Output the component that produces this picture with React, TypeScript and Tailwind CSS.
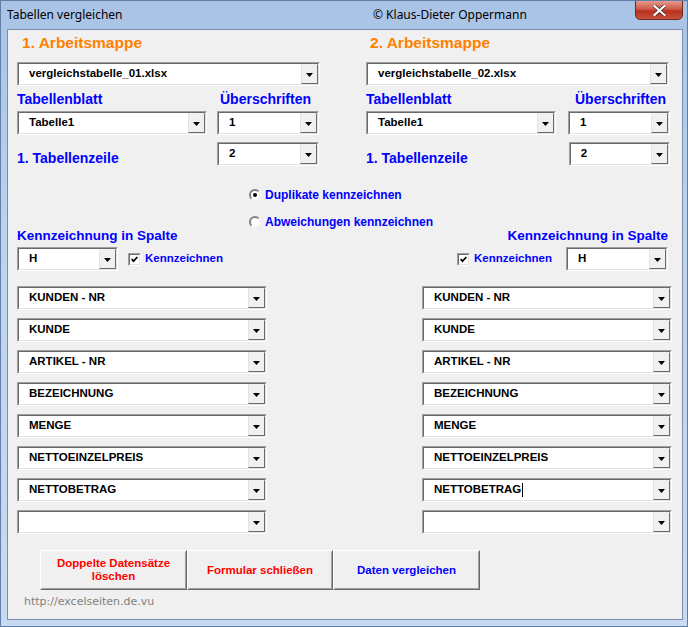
import React from 'react'

const fields = ['KUNDEN - NR', 'KUNDE', 'ARTIKEL - NR', 'BEZEICHNUNG', 'MENGE', 'NETTOEINZELPREIS', 'NETTOBETRAG', '']

function Arrow() {
  return (
    <svg width="7" height="4" viewBox="0 0 7 4" className="mt-px">
      <path d="M0 0h7L3.5 4z" fill="#000" />
    </svg>
  )
}

function Combo({ value = '', className = '', caret = false }: { value?: string; className?: string; caret?: boolean }) {
  return (
    <div className={`h-[24px] flex border border-t-[#a0a0a0] border-l-[#a0a0a0] border-b-white border-r-white ${className}`}>
      <div className="flex-1 min-w-0 flex bg-white border border-t-[#696969] border-l-[#696969] border-b-[#e3e3e3] border-r-[#e3e3e3]">
        <div className="flex-1 min-w-0 flex items-center pl-[10px] text-[11.5px] font-bold text-black whitespace-nowrap overflow-hidden">
          {value}
          {caret && <span className="ml-px w-px h-[14px] bg-black" />}
        </div>
        <div className="w-[17px] flex items-center justify-center bg-[#f0f0f0] border border-t-[#f0f0f0] border-l-[#e3e3e3] border-b-[#696969] border-r-[#696969]">
          <Arrow />
        </div>
      </div>
    </div>
  )
}

function Check() {
  return (
    <div className="w-[13px] h-[13px] border border-t-[#a0a0a0] border-l-[#a0a0a0] border-b-white border-r-white">
      <div className="w-full h-full bg-white border border-t-[#696969] border-l-[#696969] border-b-[#e3e3e3] border-r-[#e3e3e3] flex items-center justify-center">
        <svg width="7" height="7" viewBox="0 0 7 7">
          <path d="M0.6 3.2L2.5 5.2L6.4 1" stroke="#000" strokeWidth="1.7" fill="none" />
        </svg>
      </div>
    </div>
  )
}

function Radio({ on = false }: { on?: boolean }) {
  return (
    <div className="w-[12px] h-[12px] rounded-full bg-white border-2 border-t-[#808080] border-l-[#808080] border-b-[#f4f4f4] border-r-[#f4f4f4] flex items-center justify-center">
      {on && <div className="w-[4px] h-[4px] rounded-full bg-black" />}
    </div>
  )
}

function Btn({ children, className = '' }: { children: React.ReactNode; className?: string }) {
  return (
    <div className={`h-[40px] bg-[#f0f0f0] border border-t-white border-l-white border-b-[#696969] border-r-[#696969] ${className}`}>
      <div className="w-full h-full flex items-center justify-center text-center leading-[13px] text-[11.5px] font-bold border border-t-[#f0f0f0] border-l-[#f0f0f0] border-b-[#a0a0a0] border-r-[#a0a0a0]">
        {children}
      </div>
    </div>
  )
}

function Workbook({ n, file, right = false }: { n: number; file: string; right?: boolean }) {
  return (
    <div className="flex flex-col">
      <div className={`mt-[3px] h-[20px] leading-[20px] text-[15.5px] font-bold text-[#ff8000] ${right ? 'pl-[4px]' : 'pl-[5px]'}`}>
        {n}. Arbeitsmappe
      </div>
      <Combo className="mt-[9px] w-[303px]" value={file} />
      <div className="mt-[5px] h-[16px] flex items-center text-[14px] font-bold text-[#0000ff]">
        <span className="w-[203px]">Tabellenblatt</span>
        <span className={right ? 'ml-[6px]' : ''}>Überschriften</span>
      </div>
      <div className="mt-[4px] flex">
        <Combo className="w-[190px]" value="Tabelle1" />
        <Combo className={`w-[102px] ${right ? 'ml-[12px]' : 'ml-[10px]'}`} value="1" />
      </div>
      <div className="mt-[7px] flex items-end">
        <span className="w-[200px] h-[16px] leading-[16px] text-[14px] font-bold text-[#0000ff]">1. Tabellenzeile</span>
        <Combo className={`w-[102px] ${right ? 'ml-[4px]' : ''}`} value="2" />
      </div>
    </div>
  )
}

export default function App() {
  return (
    <div className="w-[688px] h-[627px] overflow-hidden flex flex-col bg-[linear-gradient(180deg,#a9c3e6_0%,#bed3ee_40%,#c8daf1_100%)] border border-[#5f7ea8] font-['Liberation_Sans',Arial,sans-serif]">
      {/* title bar */}
      <div className="h-[28px] flex items-start shrink-0">
        <span className="mt-[6px] ml-[6px] w-[366px] text-[12px] leading-[16px] text-black font-['Noto_Sans',sans-serif]">Tabellen vergleichen</span>
        <span className="mt-[6px] text-[12px] leading-[16px] text-black font-['Noto_Sans',sans-serif]">© Klaus-Dieter Oppermann</span>
        <div className="ml-auto mr-[4px] -mt-px w-[48px] h-[20px] rounded-b-[5px] border border-[#6b2a22] bg-[linear-gradient(180deg,#e49a8e_0%,#cf5a4a_45%,#b8321f_55%,#c8503c_100%)] flex items-center justify-center">
          <svg width="13" height="11" viewBox="0 0 13 11">
            <path d="M1.5 1L11.5 10M11.5 1L1.5 10" stroke="#3b1a16" strokeWidth="3.6" strokeLinecap="square" />
            <path d="M1.5 1L11.5 10M11.5 1L1.5 10" stroke="#fff" strokeWidth="2.2" strokeLinecap="square" />
          </svg>
        </div>
      </div>

      {/* client area */}
      <div className="ml-[6px] w-[676px] h-[591px] border border-[#7b8fab] bg-[#f0f0f0] flex flex-col pl-[9px]">
        <div className="grid grid-cols-[303px_304px] gap-x-[46px]">
          <Workbook n={1} file="vergleichstabelle_01.xlsx" />
          <Workbook n={2} file="vergleichstabelle_02.xlsx" right />
        </div>

        <div className="flex h-[105px]">
          <div className="w-[232px] flex flex-col justify-end">
            <div className="h-[16px] leading-[16px] text-[13.5px] font-bold text-[#0000ff]">Kennzeichnung in Spalte</div>
            <div className="mt-[3px] flex items-center">
              <Combo className="w-[101px]" value="H" />
              <div className="ml-[10px]"><Check /></div>
              <span className="ml-[4px] text-[11.5px] font-bold text-[#0000ff]">Kennzeichnen</span>
            </div>
          </div>
          <div className="w-[200px] pt-[21px] flex flex-col gap-[11px] text-[12px] font-bold text-[#0000ff]">
            <div className="h-[16px] flex items-center gap-[4px]"><Radio on /><span>Duplikate kennzeichnen</span></div>
            <div className="h-[16px] flex items-center gap-[4px]"><Radio /><span>Abweichungen kennzeichnen</span></div>
          </div>
          <div className="w-[219px] flex flex-col justify-end items-end">
            <div className="h-[16px] leading-[16px] text-[13.5px] font-bold text-[#0000ff]">Kennzeichnung in Spalte</div>
            <div className="mt-[3px] flex items-center">
              <Check />
              <span className="ml-[4px] text-[11.5px] font-bold text-[#0000ff]">Kennzeichnen</span>
              <Combo className="ml-[14px] w-[102px]" value="H" />
            </div>
          </div>
        </div>

        <div className="mt-[15px] grid grid-cols-[250px_250px] gap-x-[155px] gap-y-[8px]">
          {fields.map((f, i) => (
            <React.Fragment key={i}>
              <Combo value={f} />
              <Combo value={f} caret={f === 'NETTOBETRAG'} />
            </React.Fragment>
          ))}
        </div>

        <div className="mt-[16px] ml-[23px] flex text-[#ff0000]">
          <Btn className="w-[147px]">Doppelte Datensätze<br />löschen</Btn>
          <Btn className="w-[146px]">Formular schließen</Btn>
          <Btn className="w-[147px]"><span className="text-[#0000ff]">Daten vergleichen</span></Btn>
        </div>

        <div className="mt-[5px] ml-[7px] h-[14px] leading-[14px] text-[11px] text-[#808080] font-['DejaVu_Sans',sans-serif]">
          http://excelseiten.de.vu
        </div>
      </div>
    </div>
  )
}
